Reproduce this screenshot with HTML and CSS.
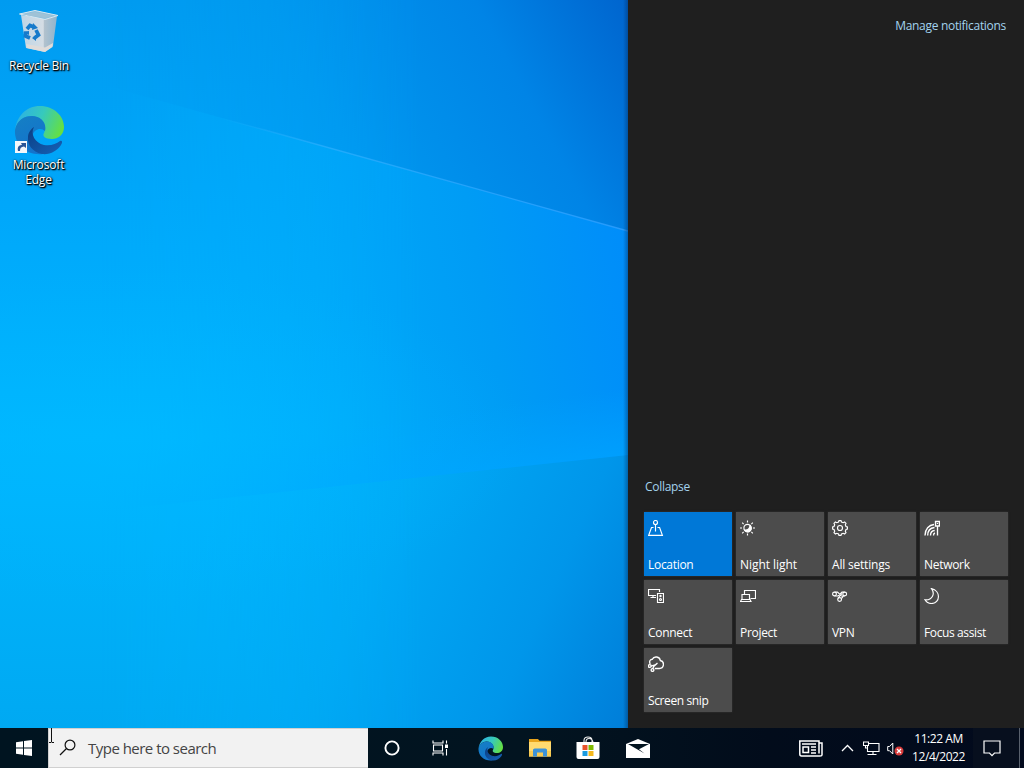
FILE: index.html
```html
<!DOCTYPE html>
<html lang="en">
<head>
<meta charset="utf-8">
<title>Desktop</title>
<link rel="stylesheet" href="styles.css">
</head>
<body>
<div class="workspace">
  <main class="desktop">
    <svg class="wallpaper" viewBox="0 0 628 728" preserveAspectRatio="none" aria-hidden="true">
      <defs>
        <linearGradient id="w-top" gradientUnits="userSpaceOnUse" x1="150" y1="260" x2="650" y2="-10">
          <stop offset="0" stop-color="#00a4f8"/><stop offset=".4" stop-color="#0098ef"/><stop offset=".72" stop-color="#0084e6"/><stop offset="1" stop-color="#005fca"/>
        </linearGradient>
        <linearGradient id="w-mid" gradientUnits="userSpaceOnUse" x1="120" y1="400" x2="650" y2="300">
          <stop offset="0" stop-color="#00b2ff"/><stop offset=".4" stop-color="#00a9f9"/><stop offset=".7" stop-color="#009cf5"/><stop offset="1" stop-color="#008cfa"/>
        </linearGradient>
        <linearGradient id="w-low" gradientUnits="userSpaceOnUse" x1="220" y1="500" x2="660" y2="700">
          <stop offset="0" stop-color="#00b4fe"/><stop offset=".35" stop-color="#00a9f5"/><stop offset=".7" stop-color="#0096ea"/><stop offset="1" stop-color="#007ad6"/>
        </linearGradient>
        <radialGradient id="w-glow" gradientUnits="userSpaceOnUse" cx="0" cy="0" r="1" gradientTransform="translate(130 440) scale(400 170)">
          <stop offset="0" stop-color="#00b9ff"/><stop offset="1" stop-color="#00b4ff" stop-opacity="0"/>
        </radialGradient>
        <linearGradient id="fade" gradientUnits="userSpaceOnUse" x1="100" y1="0" x2="420" y2="0">
          <stop offset="0" stop-color="#fff" stop-opacity="0"/><stop offset="1" stop-color="#fff"/>
        </linearGradient>
        <linearGradient id="w-vert" x1="0" y1="0" x2="0" y2="1">
          <stop offset="0" stop-color="#009bf0"/><stop offset=".28" stop-color="#00a7fa"/><stop offset=".6" stop-color="#00b7ff"/><stop offset="1" stop-color="#00a9f2"/>
        </linearGradient>
        <linearGradient id="ray" gradientUnits="userSpaceOnUse" x1="220" y1="0" x2="628" y2="0">
          <stop offset="0" stop-color="#36b2ff" stop-opacity="0"/><stop offset=".25" stop-color="#36b2ff" stop-opacity=".6"/><stop offset="1" stop-color="#309fff" stop-opacity=".8"/>
        </linearGradient>
        <linearGradient id="ray-low" gradientUnits="userSpaceOnUse" x1="530" y1="400" x2="538" y2="465">
          <stop offset="0" stop-color="#00a4ff" stop-opacity="0"/><stop offset="1" stop-color="#00a4ff" stop-opacity=".7"/>
        </linearGradient>
        <linearGradient id="edge-shade" x1="0" x2="1"><stop offset="0" stop-color="#002d62" stop-opacity="0"/><stop offset="1" stop-color="#002d62" stop-opacity=".45"/></linearGradient>
        <mask id="m"><rect width="628" height="728" fill="url(#fade)"/></mask>
      </defs>
      <rect width="628" height="728" fill="url(#w-vert)"/>
      <g mask="url(#m)">
        <rect width="628" height="728" fill="url(#w-mid)"/>
        <path d="M0 0H628V231L265 130L0 56Z" fill="url(#w-top)"/>
        <path d="M0 522L628 455V728H0Z" fill="url(#w-low)"/>
        <path d="M0 455L628 388V455L0 522Z" fill="url(#ray-low)"/>
      </g>
      <rect width="628" height="728" fill="url(#w-glow)" opacity=".6"/>
      <path d="M220 118L265 130L628 231" fill="none" stroke="url(#ray)" stroke-width="1.3"/>
      <rect x="623" width="5" height="728" fill="url(#edge-shade)"/>
    </svg>
    <div class="shortcut">
      <svg class="bin-icon" width="44" height="46" viewBox="0 0 44 46">
        <defs><linearGradient id="bin" x1="0" x2="1"><stop stop-color="#bdd5e6"/><stop offset=".62" stop-color="#d5dde4"/><stop offset=".64" stop-color="#b3c2cd"/><stop offset="1" stop-color="#8eb4ce"/></linearGradient></defs>
        <path d="M4 6L28 9.5L40 7L36 37L28 43L9 39Z" fill="url(#bin)"/>
        <path d="M2.500 5L18 1.500L41 6.500L28 10.500Z" fill="#8bbfdc" stroke="#d8e7f0" stroke-width="1"/>
        <path d="M6 5.500L18 3L37 6.700L28 9Z" fill="#9fc2d6"/>
        <path d="M9 35L28 38.500L36 34L35.500 38L28 43L10 39Z" fill="#dfdcda"/>
        <g fill="none" stroke="#167acb" stroke-width="3.700"><path d="M10 20L13 16.500L17 18"/><path d="M19 21L21.500 26L17.500 29"/><path d="M13 29L8.500 27L9 22.500"/></g>
        <path d="M16 14L21 19L15 21ZM19 26L15 29L19 32ZM6 23L12 22L12 26Z" fill="#167acb"/>
      </svg>
      <span class="shortcut-label label-bin">Recycle Bin</span>
    </div>
    <div class="shortcut shortcut-edge">
      <svg width="50" height="50" viewBox="0 0 50 50">
        <defs>
          <linearGradient id="e1" x1="0" y1=".3" x2="1" y2=".6"><stop stop-color="#2cb0e6"/><stop offset=".5" stop-color="#36c9bd"/><stop offset="1" stop-color="#66e03f"/></linearGradient>
          <linearGradient id="e2" x1="0" y1="0" x2=".5" y2="1"><stop stop-color="#1580c4"/><stop offset="1" stop-color="#1373cc"/></linearGradient>
          <linearGradient id="e3" x1="0" y1="0" x2="1" y2="1"><stop stop-color="#0b3e83"/><stop offset="1" stop-color="#1562b8"/></linearGradient>
          <symbol id="edge" viewBox="0 0 50 50">
            <path d="M1 25C3 11 12 1 26 1C40 1 50 11 50 22C50 30 44 34 38 34C31 34 28 31 30 28C34 20 27 11 17 11C9 11 3 17 1 25Z" fill="url(#e1)"/>
            <path d="M1 25C3 15 10 11 18 11C27 11 33 18 31 26C27 22 20 24 18 31C17 39 22 46 29 49C13 51 0 40 1 25Z" fill="url(#e2)"/>
            <path d="M20 22C16 29 21 38 30 40C37 41 42 39 46 36C48 35 49 37 47 40C43 46 36 50 28 49C18 47 13 39 14 32C14 28 17 24 20 22Z" fill="url(#e3)"/>
          </symbol>
        </defs>
        <use href="#edge" width="50" height="50"/>
        <rect x="1" y="36" width="12" height="12" fill="#f4f7fa"/>
        <path d="M4 46C3 42 5 40 8 40L7 38H12V43L10 41.500C7 42 6 43 6 46Z" fill="#2b5596"/>
      </svg>
      <span class="shortcut-label label-edge">Microsoft<br>Edge</span>
    </div>
  </main>
  <aside class="action-center">
    <a class="manage">Manage notifications</a>
    <section class="quick">
      <a class="collapse">Collapse</a>
      <div class="tiles">
        <div class="tile active"><svg width="16" height="16" viewBox="0 0 16 16"><circle cx="7.500" cy="2.500" r="2"/><path d="M7.500 4.500V11.500M5.500 7.500H3.500L.7 15.300H14.400L11.600 7.500H9.500"/></svg><span class="t-location">Location</span></div>
        <div class="tile"><svg width="16" height="16" viewBox="0 0 16 16"><circle cx="7.500" cy="8" r="3.600"/><path d="M10.800 6.500A3.500 3.500 0 1 1 4.500 10Q10 10.500 10 5Z" fill="#fff"/><path d="M7.500 .5V2.500M7.500 13.500V15.500M0 8H2M13 8H15M2.200 2.700L3.600 4.100M11.400 11.900L12.800 13.300M2.200 13.300L3.600 11.900M11.400 4.100L12.800 2.700"/></svg><span class="t-night">Night light</span></div>
        <div class="tile"><svg width="16" height="16" viewBox="0 0 16 16"><path d="M6.500 2L7 .6H9L9.500 2L11.200 2.700L12.600 2L14 3.400L13.300 4.800L14 6.500L15.400 7V9L14 9.500L13.300 11.200L14 12.600L12.600 14L11.200 13.300L9.500 14L9 15.400H7L6.500 14L4.800 13.300L3.400 14L2 12.600L2.700 11.200L2 9.500L.6 9V7L2 6.500L2.700 4.800L2 3.400L3.400 2L4.800 2.700Z"/><circle cx="8" cy="8" r="2.500"/></svg><span class="t-settings">All settings</span></div>
        <div class="tile"><svg class="bold" width="16" height="17" viewBox="0 0 16 17"><path d="M1 15.500C1 9 5 5 10 4.500M3.700 15.500C3.700 11 6 8 10.500 7.500M6.500 15.500C6.500 12.500 8 10.700 10.700 10.500M9.500 15.500C9.500 14 10 13.300 11 13M11.500 1.500H15.500V6H11.500ZM13.500 3V4M13.500 6V15.500"/></svg><span class="t-network">Network</span></div>
        <div class="tile"><svg width="16" height="16" viewBox="0 0 16 16"><path d="M8 7.500H.5V1.500H11.500V4M5 7.500V9.500M2.500 9.500H8M9.500 5.500H15.500V14.500H9.500Z"/><circle cx="12.500" cy="8" r=".6"/><circle cx="12.500" cy="11.500" r="1"/></svg><span class="t-connect">Connect</span></div>
        <div class="tile"><svg width="16" height="16" viewBox="0 0 16 16"><path d="M4.500 6V2.500H15.500V10.500H10.500M2 11.500V6.500H9.500V11.500M.5 13.500L1.500 11.500H10L11 13.500Z"/></svg><span class="t-project">Project</span></div>
        <div class="tile"><svg width="16" height="16" viewBox="0 0 16 16"><circle cx="2.500" cy="6" r="1.900"/><circle cx="12.700" cy="6" r="1.900"/><circle cx="7.600" cy="11.500" r="1.900"/><path d="M2.500 4.100H5.500L9.500 8H12.700M12.700 4.100H10L6 8H2.500M5.900 10.500L10 5.500M9.400 10.700L11.500 8"/></svg><span class="t-vpn">VPN</span></div>
        <div class="tile"><svg width="16" height="16" viewBox="0 0 16 16"><path d="M7.500 .6C17 2.500 16.500 15.500 7.500 15.500C4.800 15.500 2.200 14 1 11.800C8 12.500 11.500 6 7.500 .6Z"/></svg><span class="t-focus">Focus assist</span></div>
        <div class="tile"><svg class="bold" width="16" height="16" viewBox="0 0 16 16"><path d="M2.200 8C.8 5 2.500 3.200 4.300 3.200C6-.2 11.800 .4 12.300 4.500C17 5.500 16.200 12.500 11.500 12.500H6.800M2.800 10.200L7.200 9L9.500 7M4.700 12.900L5.700 10.500L9 7.500"/><circle cx="1.800" cy="10" r="1.400"/><circle cx="4.500" cy="14" r="1.400"/></svg><span class="t-snip">Screen snip</span></div>
      </div>
    </section>
  </aside>
</div>
<footer class="taskbar">
  <div class="start"><svg width="16" height="16" viewBox="0 0 16 16"><path d="M0 2.200L7 1.200V7.500H0ZM8 1.100L16 0V7.500H8ZM0 8.500H7V14.800L0 13.800ZM8 8.500H16V16L8 14.900Z" fill="#fff"/></svg></div>
  <div class="search"><svg width="18" height="18" viewBox="0 0 18 18"><circle cx="11" cy="6" r="4.900" fill="none" stroke="#111" stroke-width="1.200"/><path d="M7.500 9.500L1 16" stroke="#111" stroke-width="1.300"/></svg><span>Type here to search</span></div>
  <div class="app"><svg width="16" height="16" viewBox="0 0 16 16"><circle cx="8" cy="8" r="6.600" fill="none" stroke="#fff" stroke-width="1.900"/></svg></div>
  <div class="app"><svg width="17" height="16" viewBox="0 0 17 16" fill="none" stroke="#fff" stroke-width="1.100"><path d="M1 .5V3H11V.5M1 15.500V13H11V15.500M1.500 5H10.500V11H1.500ZM14.500 .5V3.500M14.500 9V15.500"/><path d="M13 4.500H16V8H13Z" fill="#fff" stroke="none"/></svg></div>
  <div class="app app-edge"><svg width="25" height="25"><use href="#edge" width="25" height="25"/></svg></div>
  <div class="app app-files"><svg width="22" height="18" viewBox="0 0 22 18"><path d="M0 0H9L10.500 1.700H22V17H0Z" fill="#e8a41c"/><path d="M0 3H22V17.500H0Z" fill="#ffda70"/><path d="M0 12H22V17.500H0Z" fill="#f8cb52"/><path d="M4 17.500V10.500L5.500 9.500H16.500L18 10.500V17.500H14V13.500H8V17.500Z" fill="#3b92d8"/></svg></div>
  <div class="app app-store"><svg width="24" height="24" viewBox="0 0 24 24"><path d="M8 6V4.500Q8 1 12 1T16 4.500V6M10 6Q10 2.500 13 2.500T17 6" fill="none" stroke="#eee" stroke-width="1.100"/><path d="M.5 6H23.500V21Q23.500 23 21.500 23H2.500Q.5 23 .5 21Z" fill="#fff"/><path d="M6.500 9H11.500V14H6.500Z" fill="#e8532b"/><path d="M12.500 9H17.500V14H12.500Z" fill="#7fba00"/><path d="M6.500 15H11.500V20H6.500Z" fill="#1a9be0"/><path d="M12.500 15H17.500V20H12.500Z" fill="#f5b81c"/></svg></div>
  <div class="app app-mail"><svg width="24" height="19" viewBox="0 0 24 19"><path d="M0 5L12 0L24 5V19H0Z" fill="#fff"/><path d="M2 5H23L13 10.200L18.500 14.500Z" fill="#021420"/></svg></div>
  <div class="tray">
    <div class="tray-item news"><svg width="24" height="17" viewBox="0 0 24 17" fill="none" stroke="#fff" stroke-width="1.500"><path d="M20 3H23V15Q23 16 21 16H2.500Q.8 16 .8 14V1H20V13.500"/><path d="M4 7H9.500V12.500H4ZM3 4H17M12 7H17M12 10H17M12 13H17"/></svg></div>
    <div class="tray-item chevron"><svg width="13" height="8" viewBox="0 0 13 8"><path d="M1 7L6.500 1.500L12 7" fill="none" stroke="#fff" stroke-width="1.300"/></svg></div>
    <div class="tray-item net"><svg width="17" height="15" viewBox="0 0 17 15" fill="none" stroke="#fff" stroke-width="1.100"><path d="M6 2.500H16V10.500H4.500V5M.5 1H5.500V4.500H.5ZM2.500 4.500V7H4.500M10 10.500V13.500M4.500 13.500H13.500"/></svg></div>
    <div class="tray-item sound"><svg width="17" height="15" viewBox="0 0 17 15"><path d="M.7 5.500H2.500L5.800 2V13L2.500 9.700H.7Z" fill="none" stroke="#fff"/><circle cx="12" cy="10" r="4.500" fill="#d83b3b"/><path d="M10 8L14 12M14 8L10 12" stroke="#fff" stroke-width="1.300"/></svg></div>
    <div class="clock"><span class="time">11:22 AM</span><span class="date">12/4/2022</span></div>
    <div class="tray-item notify"><svg width="18" height="17" viewBox="0 0 18 17"><path d="M1 1H17V13H11.500L9 15.700L6.500 13H1Z" fill="none" stroke="#fff" stroke-width="1.200"/></svg></div>
    <div class="peek"></div>
  </div>
  <svg class="cursor" width="8" height="16" viewBox="0 0 8 16"><path d="M3.500 0V14M1 14.500H3L3.500 14L4 14.500H6" stroke="#111" fill="none"/></svg>
</footer>
</body>
</html>
```
FILE: styles.css
```css
* { box-sizing: border-box; }
body {
  margin: 0;
  width: 1024px;
  height: 768px;
  overflow: hidden;
  display: flex;
  flex-direction: column;
  background: #000;
  color: #fff;
  font: 12px/16px "Open Sans", "Noto Sans", sans-serif;
}
svg { display: block; flex: none; }
span, a { white-space: nowrap; }

.workspace { display: flex; height: 728px; }
.desktop {
  position: relative;
  width: 628px;
  padding-top: 9px;
  overflow: hidden;
}
.wallpaper { position: absolute; inset: 0; width: 628px; height: 728px; }
.shortcut {
  position: relative;
  width: 78px;
  display: flex;
  flex-direction: column;
  align-items: center;
}
.shortcut-label {
  line-height: 15px;
  text-align: center;
  text-shadow: 1px 1px 1px #000, 1px 1px 2px #000, 0 0 2px rgba(0, 0, 0, .8);
}
.label-bin { margin-top: 3px; letter-spacing: -.25px; }
.shortcut-edge { margin-top: 32px; }
.label-edge { margin: 2px 1px 0 0; letter-spacing: -.15px; }

.action-center {
  width: 396px;
  padding: 18px 16px 16px;
  background: #1f1f1f;
  display: flex;
  flex-direction: column;
  justify-content: space-between;
}
.manage, .collapse { color: #a3d3ee; }
.manage { align-self: flex-end; margin-right: 2px; letter-spacing: -.3px; }
.collapse { display: block; margin: 0 0 17px 1px; letter-spacing: -.3px; }
.tiles {
  display: grid;
  grid-template-columns: repeat(4, 88px);
  grid-auto-rows: 64px;
  gap: 4px;
}
.tile {
  padding: 8px 4px 3px;
  background: #4c4c4c;
  display: flex;
  flex-direction: column;
  justify-content: space-between;
  letter-spacing: -.3px;
  box-shadow: 0 0 2px rgba(76, 76, 76, .5);
}
.tile.active { background: #0078d7; }
.tile svg { fill: none; stroke: #fff; stroke-width: 1.15; }
.tile svg.bold { stroke-width: 1.35; }
.t-night { letter-spacing: -.05px; }
.t-settings { letter-spacing: -.2px; }
.t-focus, .t-snip { letter-spacing: -.38px; }

.taskbar {
  position: relative;
  height: 40px;
  display: flex;
  background: linear-gradient(90deg, #001420 0, #021420 52%, #020c1b 75%, #020a1d);
}
.start { width: 48px; display: flex; align-items: center; justify-content: center; }
.search {
  width: 320px;
  padding: 0 10px;
  display: flex;
  align-items: center;
  gap: 11px;
  background: #f2f2f2;
  border: 1px solid #d0d0d0;
  border-right: 0;
  color: #444;
  font-size: 15px;
  letter-spacing: -.52px;
}
.app { width: 48px; display: flex; align-items: center; justify-content: center; }
.app-edge { width: 53px; }
.app-files { width: 46px; }
.app-store, .app-mail { width: 50px; }
.tray { margin-left: auto; display: flex; align-items: center; }
.tray-item { display: flex; align-items: center; justify-content: center; }
.news { width: 48px; }
.chevron { width: 24px; }
.net { width: 24px; }
.sound { width: 24px; }
.clock {
  width: 66px;
  display: flex;
  flex-direction: column;
  align-items: center;
  line-height: 18px;
  padding: 0 3px 1px 0;
}
.clock span { letter-spacing: -.45px; }
.notify { width: 46px; height: 40px; padding-right: 9px; background: #070f1e; }
.peek { width: 5px; height: 40px; border-left: 1px solid #59616d; }
.cursor { position: absolute; left: 48px; top: 0; }
```
